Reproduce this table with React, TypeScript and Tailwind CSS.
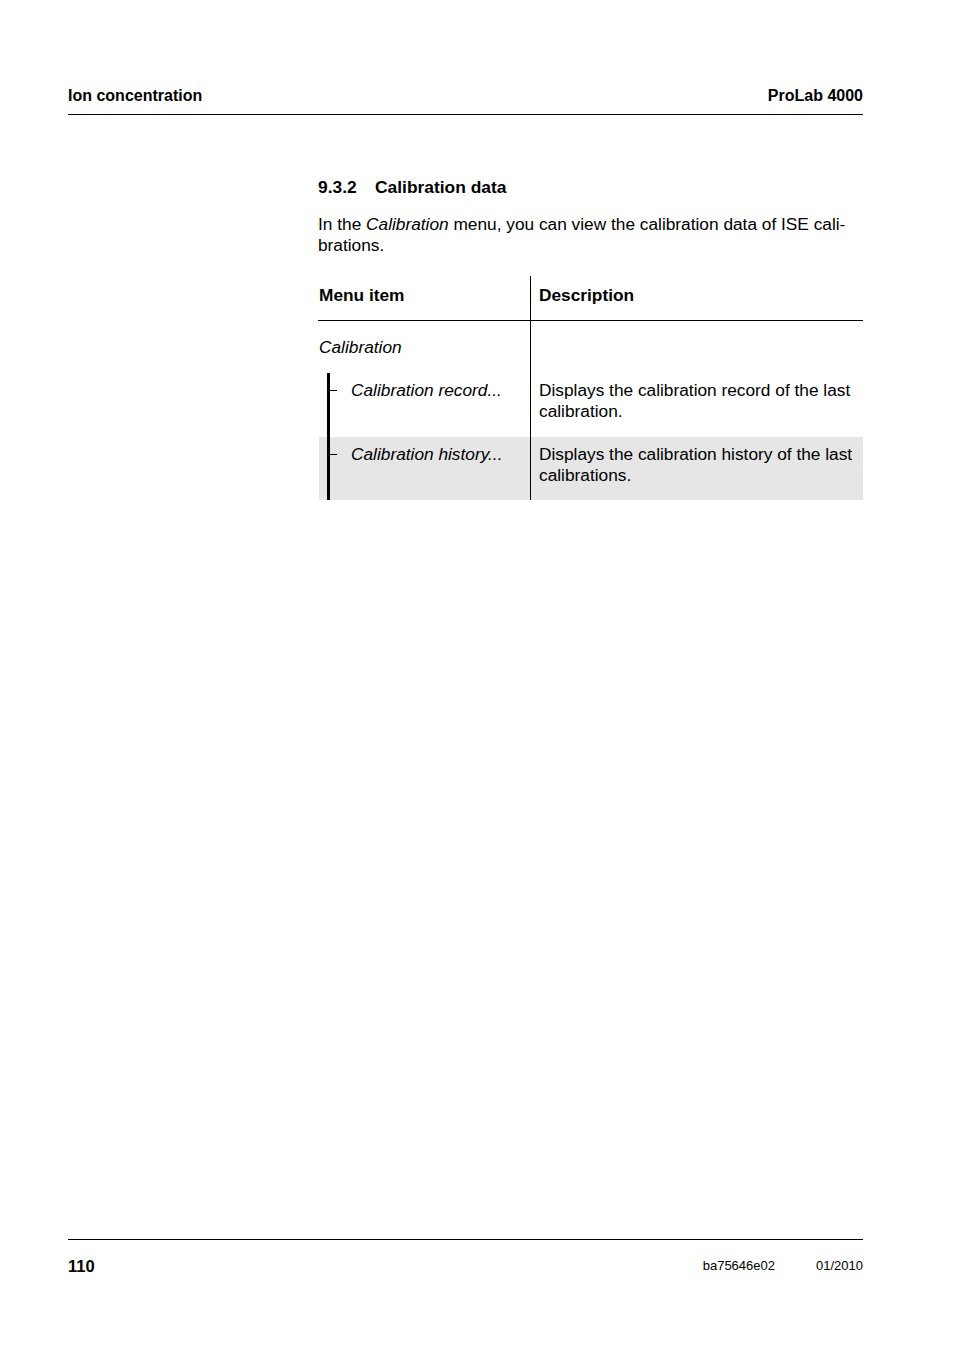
export default function App() {
  const font = { fontFamily: '"Liberation Sans", Arial, sans-serif' };
  return (
    <div className="flex h-[1351px] w-[954px] flex-col bg-white text-black" style={font}>
      {/* running header */}
      <div className="ml-[68px] mr-[91px] mt-[87px] flex justify-between border-b border-black pb-[9px] text-[16px] font-bold leading-[18px]">
        <span>Ion concentration</span>
        <span>ProLab 4000</span>
      </div>

      <div className="ml-[318px] w-[545px]">
        <h3 className="mt-[62px] flex text-[17.4px] font-bold leading-[20px]">
          <span className="w-[57px]">9.3.2</span>
          <span>Calibration data</span>
        </h3>
        <p className="mt-[17px] text-[17.3px] leading-[21px]">
          In the <i>Calibration</i> menu, you can view the calibration data of ISE cali-
          <br />
          brations.
        </p>

        {/* menu table */}
        <div className="mt-[20px] text-[17.3px] leading-[21px]">
          <div className="flex h-[45px] border-b border-black">
            <div className="w-[213px] border-r border-black pl-[1px] pt-[9px] font-bold">Menu item</div>
            <div className="flex-1 pl-[8px] pt-[9px] font-bold">Description</div>
          </div>
          <div className="flex h-[52px]">
            <div className="w-[213px] border-r border-black pl-[1px] pt-[16px] italic">Calibration</div>
            <div className="flex-1" />
          </div>
          <MenuRow
            label="Calibration record..."
            desc={["Displays the calibration record of the last", "calibration."]}
            shaded={false}
            height="h-[64px]"
          />
          <MenuRow
            label="Calibration history..."
            desc={["Displays the calibration history of the last", "calibrations."]}
            shaded
            height="h-[63px]"
          />
        </div>
      </div>

      {/* footer */}
      <div className="ml-[68px] mr-[91px] mt-auto flex h-[112px] items-start justify-between border-t border-black pt-[16px]">
        <span className="text-[16.5px] font-bold leading-[20px]">110</span>
        <div className="flex gap-[41px] pt-[2px] text-[13px] leading-[16px]">
          <span>ba75646e02</span>
          <span>01/2010</span>
        </div>
      </div>
    </div>
  );
}

function MenuRow({
  label,
  desc,
  shaded,
  height,
}: {
  label: string;
  desc: string[];
  shaded: boolean;
  height: string;
}) {
  return (
    <div className={`ml-[1px] flex ${height} ${shaded ? "bg-[#e6e6e6]" : ""}`}>
      <div className="flex w-[212px] border-r border-black pl-[8px]">
        <div className="w-[3px] bg-black" />
        <div className="mt-[17px] h-[1px] w-[7px] bg-black" />
        <div className="pl-[14px] pt-[7px] italic">{label}</div>
      </div>
      <div className="flex-1 pl-[8px] pt-[7px]">
        {desc.map((l) => (
          <div key={l}>{l}</div>
        ))}
      </div>
    </div>
  );
}
